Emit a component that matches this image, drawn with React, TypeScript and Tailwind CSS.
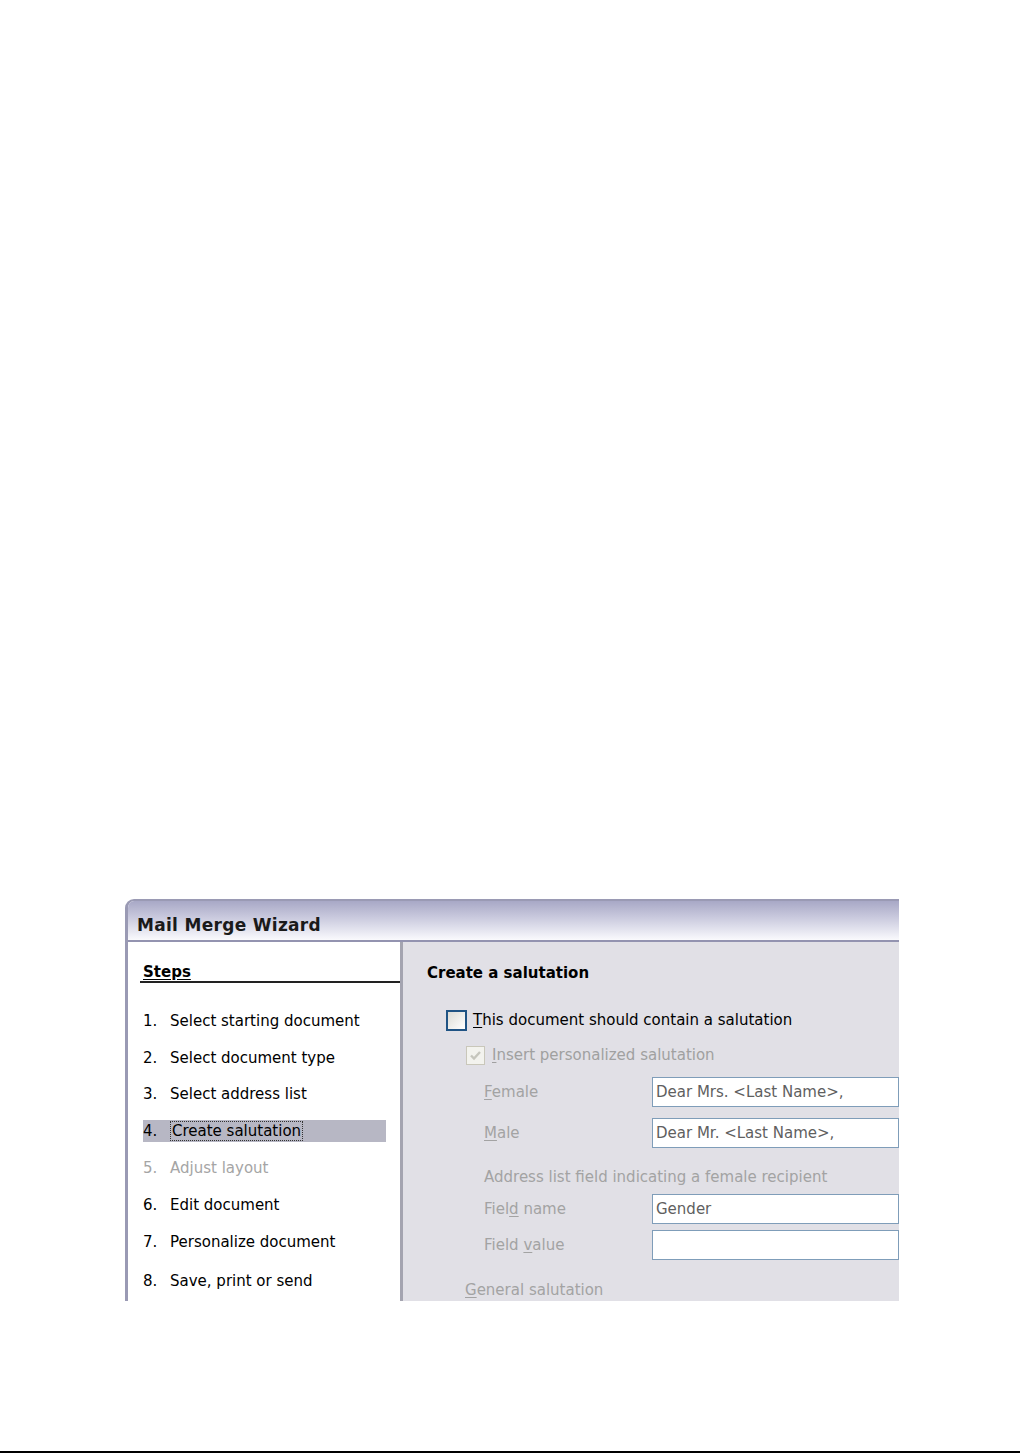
import React from "react";

const font = { fontFamily: '"DejaVu Sans", Verdana, sans-serif' };

function U({ c }: { c: string }) {
  return <span className="underline underline-offset-2">{c}</span>;
}

export default function App() {
  const steps: [string, string, "normal" | "disabled" | "active"][] = [
    ["1.", "Select starting document", "normal"],
    ["2.", "Select document type", "normal"],
    ["3.", "Select address list", "normal"],
    ["4.", "Create salutation", "active"],
    ["5.", "Adjust layout", "disabled"],
    ["6.", "Edit document", "normal"],
    ["7.", "Personalize document", "normal"],
    ["8.", "Save, print or send", "normal"],
  ];
  const gaps = ["mt-[27px]", "mt-[15px]", "mt-[14px]", "mt-[15px]", "mt-[15px]", "mt-[15px]", "mt-[15px]", "mt-[17px]"];
  return (
    <div className="w-[1020px] h-[1453px] bg-white flex flex-col" style={font}>
      <div className="ml-[125px] mt-[899px] w-[774px] h-[402px] overflow-hidden flex flex-col rounded-tl-[9px] border-l-[3px] border-t-[2px] border-[#9a9ab4] bg-white">
        {/* Title bar */}
        <div className="h-[41px] shrink-0 bg-gradient-to-b from-[#a8a8c6] via-[#d0d0e2] to-[#fafafd] flex items-center pl-[9px] border-b-[2px] border-[#9393b0]">
          <span className="text-[17px] font-bold text-[#1a1a1a] tracking-[0.3px] mt-[11px]">
            Mail Merge Wizard
          </span>
        </div>
        <div className="flex flex-1 min-h-0">
          {/* Steps panel */}
          <div className="w-[275px] shrink-0 bg-white pt-[20px] border-r-[3px] border-[#a4a4b0]">
            <div className="ml-[12px] border-b-[2px] border-[#222] h-[21px] flex items-end">
              <span className="text-[15px] leading-[18px] font-bold text-black underline underline-offset-2 ml-[3px]">Steps</span>
            </div>
            <div className="flex flex-col">
              {steps.map(([n, t, s], i) => (
                <div
                  key={n}
                  className={
                    "ml-[15px] w-[243px] h-[22px] flex items-center text-[15px] " +
                    gaps[i] +
                    " " +
                    (s === "active" ? "bg-[#b7b7c4] text-black" : s === "disabled" ? "text-[#a5a5a5]" : "text-black")
                  }
                >
                  <span className="w-[27px]">{n}</span>
                  <span className={s === "active" ? "border border-dotted border-[#333] px-[1px] leading-[18px]" : ""}>{t}</span>
                </div>
              ))}
            </div>
          </div>
          {/* Right panel */}
          <div className="flex-1 bg-[#e1e0e6] pl-[24px] pt-[20px] text-[15px]">
            <div className="font-bold text-black text-[15px] h-[22px] flex items-center">Create a salutation</div>
            <div className="mt-[25px] ml-[19px] flex items-center h-[22px]">
              <div className="w-[21px] h-[21px] border-[2px] border-[#1f5384] bg-gradient-to-br from-[#dcdcd6] to-white" />
              <span className="ml-[6px] text-black">
                <U c="T" />his document should contain a salutation
              </span>
            </div>
            <div className="mt-[13px] ml-[39px] flex items-center h-[22px] text-[#a0a0a0]">
              <div className="w-[19px] h-[19px] border border-[#c9c7ba] bg-[#f3f3ee] flex items-center justify-center">
                <svg width="13" height="11" viewBox="0 0 13 11">
                  <path d="M2 5.5 L5 8.5 L11 2" fill="none" stroke="#c6c6bd" strokeWidth="2.4" />
                </svg>
              </div>
              <span className="ml-[7px]">
                <U c="I" />nsert personalized salutation
              </span>
            </div>
            <div className="ml-[57px] mt-[11px] flex flex-col text-[#a3a3a3]">
              <div className="flex items-center h-[30px]">
                <span className="w-[168px]"><U c="F" />emale</span>
                <div className="flex-1 h-[30px] bg-white border border-[#7f9db9] flex items-center pl-[3px] text-[#5f5f5f]">Dear Mrs. &lt;Last Name&gt;,</div>
              </div>
              <div className="flex items-center h-[30px] mt-[11px]">
                <span className="w-[168px]"><U c="M" />ale</span>
                <div className="flex-1 h-[30px] bg-white border border-[#7f9db9] flex items-center pl-[3px] text-[#5f5f5f]">Dear Mr. &lt;Last Name&gt;,</div>
              </div>
              <div className="h-[22px] flex items-center mt-[18px]">Address list field indicating a female recipient</div>
              <div className="flex items-center h-[30px] mt-[6px]">
                <span className="w-[168px]">Fiel<U c="d" /> name</span>
                <div className="flex-1 h-[30px] bg-white border border-[#7f9db9] flex items-center pl-[3px] text-[#5f5f5f]">Gender</div>
              </div>
              <div className="flex items-center h-[30px] mt-[6px]">
                <span className="w-[168px]">Field <U c="v" />alue</span>
                <div className="flex-1 h-[30px] bg-white border border-[#7f9db9]" />
              </div>
            </div>
            <div className="ml-[38px] mt-[19px] h-[22px] flex items-center text-[#a3a3a3]">
              <U c="G" />eneral salutation
            </div>
          </div>
        </div>
      </div>
      <div className="flex-1" />
      <div className="h-[2px] bg-black shrink-0" />
    </div>
  );
}
